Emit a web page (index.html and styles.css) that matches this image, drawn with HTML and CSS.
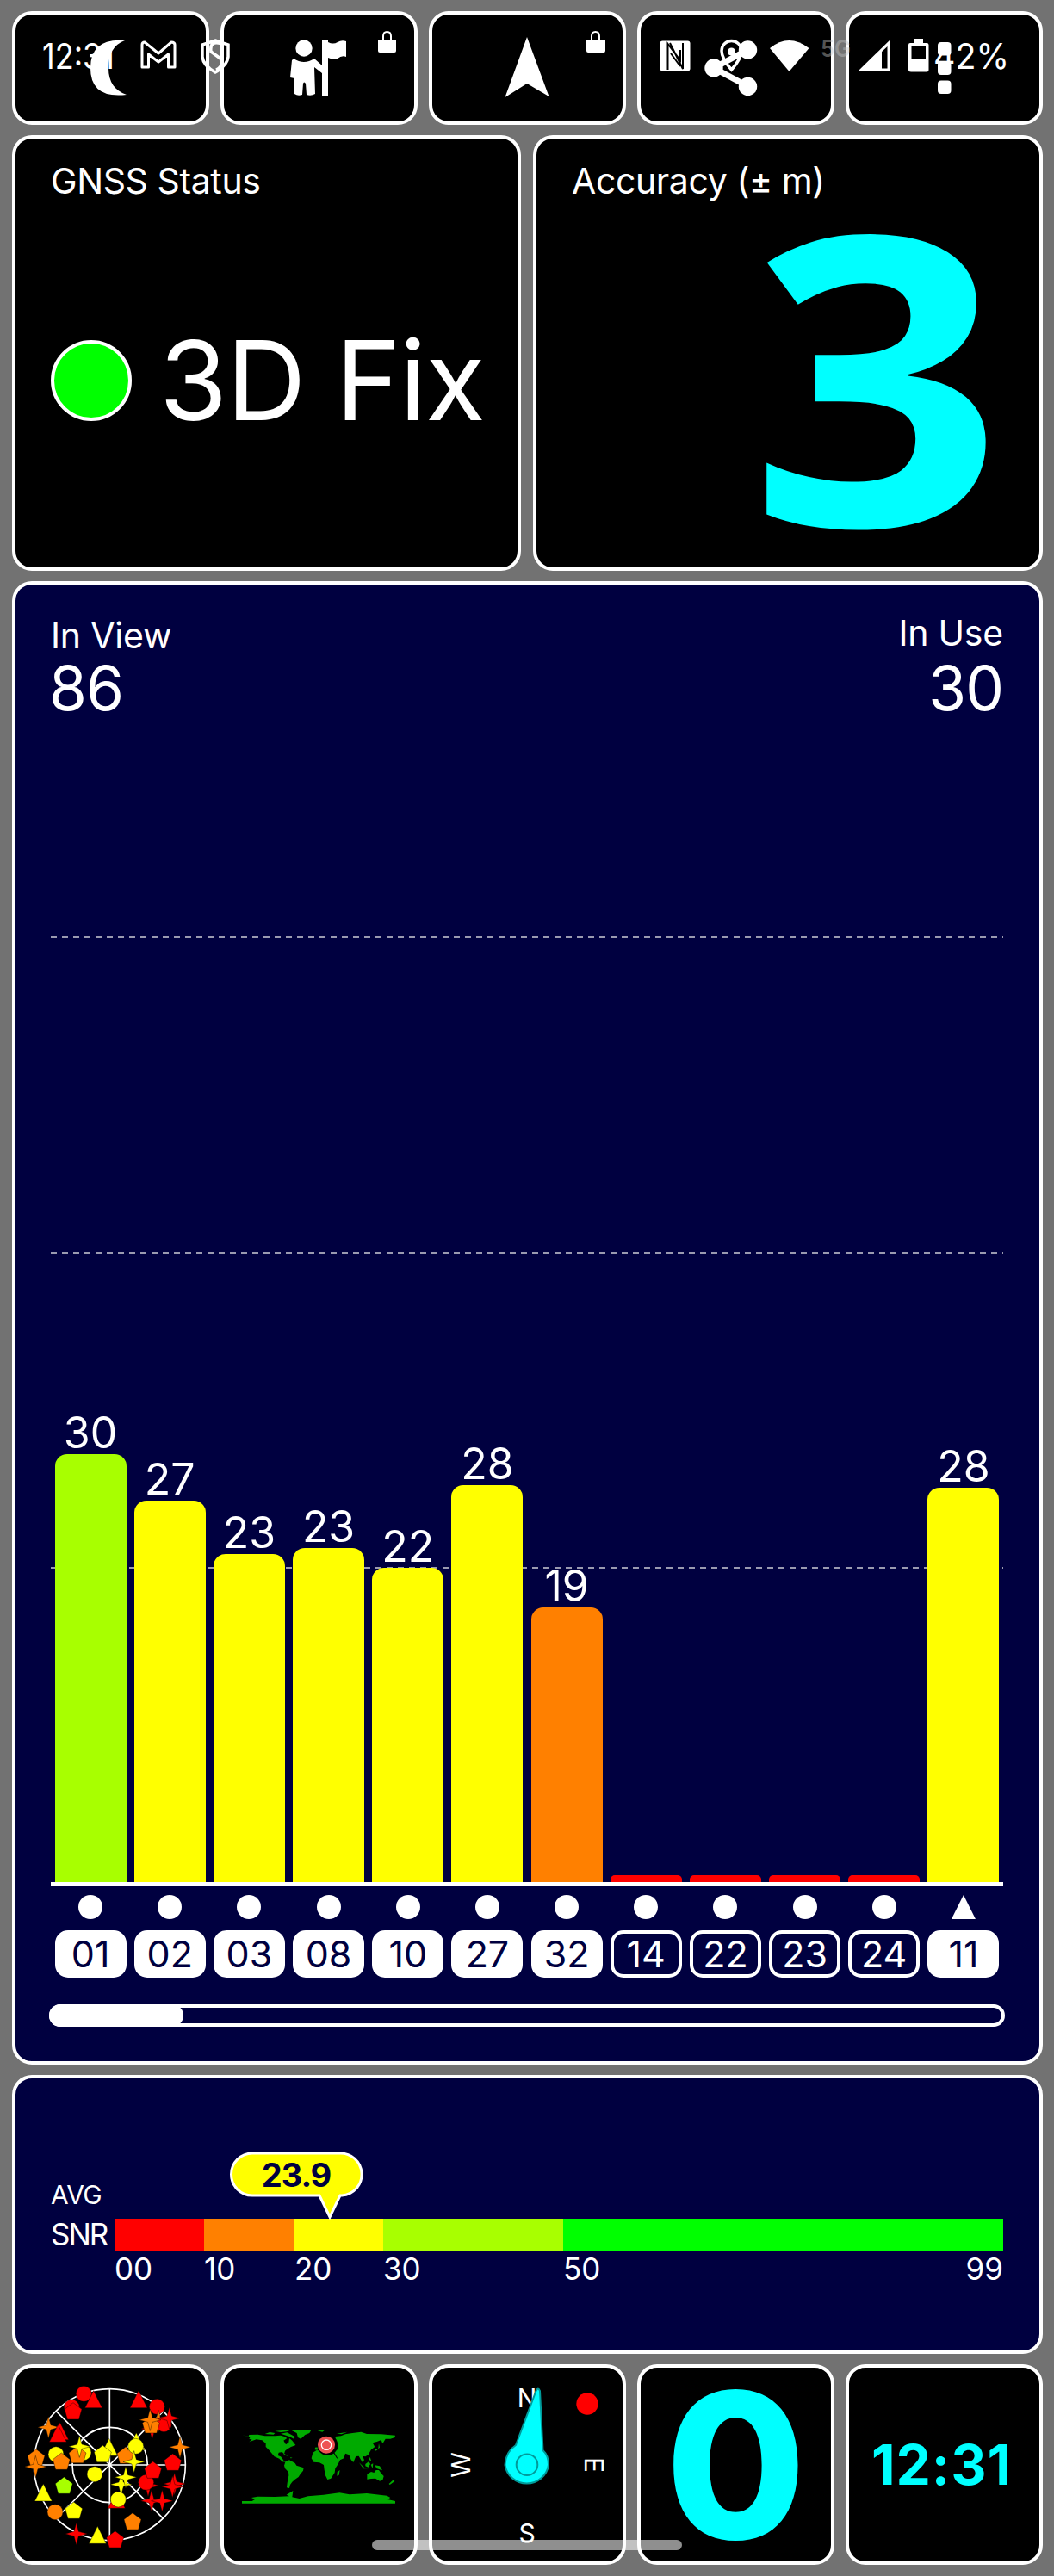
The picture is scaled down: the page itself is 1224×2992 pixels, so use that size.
FILE: index.html
```html
<!DOCTYPE html>
<html lang="en" dir="ltr">
  <head>
    <meta charset="utf-8">
    <title>GNSS Status</title>
    <link rel="stylesheet" href="styles.css">
  </head>
  <body>
    <div id="screen">
      <div class="row" id="toolbar">
        <div class="card">
          <svg viewBox="18 17 221 124"><path d="M145 47 Q105 44 105 79 Q105 115 147 110 Q126 103 126 79 Q126 54 145 47Z"/></svg>
        </div>
        <div class="card">
          <svg viewBox="260 17 221 124">
            <circle cx="353" cy="56" r="9.7"/>
            <path d="M341 68 Q353 76 365 68 L374 76 V47 Q374 46 377 46 H381 V49 Q387 52 392 49 Q397 46 402 48 V66 Q397 64 392 68 Q387 70 381 67 V111 H374 V85 L365 78 L366 109 Q361 112 356 110 L355 97 Q353 94 352 97 L351 110 Q346 112 342 109 L342 91 L337 90 L339 70Z"/>
            <path d="M439 46 H460 V59 Q460 61 458 61 H441 Q439 61 439 59Z"/>
            <path class="line" d="M445 47 V42 Q445 37 449.500 37 Q454 37 454 42 V47" stroke-width="2"/>
          </svg>
        </div>
        <div class="card">
          <svg viewBox="502 17 221 124">
            <path d="M612 43 L637.500 112 L612 97 L586.500 113Z"/>
            <path d="M681 46 H703 V59 Q703 61 701 61 H683 Q681 61 681 59Z"/>
            <path class="line" d="M687 47 V42 Q687 37 691.500 37 Q696 37 696 42 V47" stroke-width="2"/>
          </svg>
        </div>
        <div class="card">
          <svg viewBox="744 17 221 124">
            <path class="line" d="M868 58 L829 79 L868 100" stroke-width="7"/>
            <circle cx="868.500" cy="58" r="10.700"/><circle cx="829" cy="79" r="10.700"/><circle cx="868.500" cy="100.500" r="10.700"/>
          </svg>
        </div>
        <div class="card">
          <svg viewBox="986 17 221 124">
            <rect x="1089" y="49" width="15.500" height="15.500" rx="4"/><rect x="1089" y="71" width="15.500" height="16" rx="4"/><rect x="1089" y="93.500" width="15.500" height="15.500" rx="4"/>
          </svg>
        </div>
      </div>

      <div class="row" id="readouts">
        <div class="card">
          <div class="label">GNSS Status</div>
          <div class="fix"><i></i><span>3D Fix</span></div>
        </div>
        <div class="card">
          <div class="label">Accuracy (± m)</div>
          <div class="accuracy">3</div>
        </div>
      </div>

      <div class="card navy" id="chart">
        <div class="stats">
          <div class="view"><span>In View</span><b>86</b></div>
          <div class="use"><span>In Use</span><b>30</b></div>
        </div>
        <div class="plot">
          <svg class="gridlines" viewBox="0 0 1106 1351"><path d="M0 253 H1106 M0 620 H1106 M0 986 H1106"/></svg>
          <div class="col"><span>30</span><i class="lime" style="height: 497px"></i></div>
          <div class="col"><span>27</span><i class="yellow" style="height: 443px"></i></div>
          <div class="col"><span>23</span><i class="yellow" style="height: 381px"></i></div>
          <div class="col"><span>23</span><i class="yellow" style="height: 388px"></i></div>
          <div class="col"><span>22</span><i class="yellow" style="height: 365px"></i></div>
          <div class="col"><span>28</span><i class="yellow" style="height: 461px"></i></div>
          <div class="col"><span>19</span><i class="orange" style="height: 319px"></i></div>
          <div class="col"><i class="red" style="height: 8px"></i></div>
          <div class="col"><i class="red" style="height: 8px"></i></div>
          <div class="col"><i class="red" style="height: 8px"></i></div>
          <div class="col"><i class="red" style="height: 8px"></i></div>
          <div class="col"><span>28</span><i class="yellow" style="height: 458px"></i></div>
        </div>
        <div class="sats">
          <div class="sat used"><i></i><span>01</span></div>
          <div class="sat used"><i></i><span>02</span></div>
          <div class="sat used"><i></i><span>03</span></div>
          <div class="sat used"><i></i><span>08</span></div>
          <div class="sat used"><i></i><span>10</span></div>
          <div class="sat used"><i></i><span>27</span></div>
          <div class="sat used"><i></i><span>32</span></div>
          <div class="sat"><i></i><span>14</span></div>
          <div class="sat"><i></i><span>22</span></div>
          <div class="sat"><i></i><span>23</span></div>
          <div class="sat"><i></i><span>24</span></div>
          <div class="sat used"><i class="tri"></i><span>11</span></div>
        </div>
        <div class="scroll"><i></i></div>
      </div>

      <div class="card navy" id="snr">
        <div class="names"><span class="avg">AVG</span><span>SNR</span></div>
        <div class="scale">
          <div class="bands"><i class="red"></i><i class="orange"></i><i class="yellow"></i><i class="lime"></i><i class="green"></i></div>
          <div class="ticks"><span>00</span><span>10</span><span>20</span><span>30</span><span>50</span><span>99</span></div>
          <div class="balloon">
            <svg viewBox="0 0 156 80"><path d="M27 2 H128 A24.500 24.500 0 0 1 131 51 H129 L117 76 L105 51 H27 A24.500 24.500 0 0 1 27 2Z"/></svg>
            <span>23.9</span>
          </div>
        </div>
      </div>

      <div class="row" id="widgets">
        <div class="card">
          <svg viewBox="18 2750 221 225">
            <defs>
              <circle id="c" r="27"/>
              <path id="t" d="M0 -34 L30 26 H-30Z"/>
              <path id="p" d="M0 -31 L30 -8 L20 27 H-20 L-30 -8Z"/>
              <path id="s" d="M0 -38 L8 -8 L38 0 L8 8 L0 38 L-8 8 L-38 0 L-8 -8Z"/>
            </defs>
            <g transform="translate(30 2765) scale(.33333)">
              <g class="line" stroke-width="5">
                <circle cx="292" cy="293" r="264"/><circle cx="293" cy="294" r="131"/>
                <path d="M292 29 V557 M28 294 H556 M106 107 L479 481 M106 480 L479 107"/>
              </g>
              <g class="marks">
                <use href="#c" x="160" y="93" fill="red"/><use href="#p" x="165" y="108" fill="red"/>
                <use href="#c" x="202" y="46" fill="red"/><use href="#t" x="236" y="69" fill="red"/>
                <use href="#t" x="393" y="69" fill="red"/><use href="#c" x="457" y="91" fill="red"/>
                <use href="#s" x="440" y="168" fill="red"/><use href="#s" x="462" y="141" fill="#ff8000"/>
                <use href="#c" x="481" y="152" fill="red"/><use href="#s" x="500" y="131" fill="red"/>
                <use href="#p" x="436" y="156" fill="#ff8000"/><use href="#s" x="433" y="137" fill="#ff8000"/>
                <use href="#s" x="79" y="163" fill="#ff8000"/>
                <use href="#t" x="119" y="180" fill="red"/><use href="#t" x="112" y="188" fill="red"/>
                <use href="#c" x="105" y="257" fill="#ff0"/><use href="#p" x="36" y="270" fill="#ff8000"/>
                <use href="#s" x="34" y="300" fill="#ff8000"/><use href="#p" x="124" y="283" fill="#ff8000"/>
                <use href="#c" x="201" y="251" fill="#ff0"/><use href="#p" x="180" y="260" fill="#ff8000"/>
                <use href="#s" x="187" y="230" fill="#ff0"/><use href="#t" x="290" y="236" fill="#ff0"/>
                <use href="#p" x="268" y="257" fill="#ff0"/><use href="#p" x="348" y="262" fill="#ff8000"/>
                <use href="#t" x="385" y="216" fill="#ff0"/><use href="#c" x="383" y="229" fill="#ff0"/>
                <use href="#s" x="377" y="283" fill="#ff0"/><use href="#s" x="537" y="232" fill="#ff8000"/>
                <use href="#p" x="512" y="286" fill="red"/><use href="#s" x="426" y="366" fill="red"/>
                <use href="#c" x="419" y="355" fill="red"/><use href="#p" x="443" y="313" fill="red"/>
                <use href="#s" x="518" y="360" fill="red"/><use href="#s" x="511" y="370" fill="red"/>
                <use href="#s" x="438" y="419" fill="red"/><use href="#s" x="475" y="419" fill="red"/>
                <use href="#s" x="332" y="362" fill="#ff0"/><use href="#s" x="348" y="337" fill="#ff0"/>
                <use href="#c" x="240" y="326" fill="#ff0"/><use href="#p" x="133" y="367" fill="#a8ff00"/>
                <use href="#t" x="61" y="394" fill="#ff0"/><use href="#c" x="102" y="458" fill="#ff8000"/>
                <use href="#p" x="167" y="454" fill="#ff0"/><use href="#t" x="316" y="419" fill="red"/>
                <use href="#c" x="322" y="414" fill="#ff0"/><use href="#p" x="372" y="492" fill="#ff8000"/>
                <use href="#s" x="176" y="534" fill="red"/><use href="#t" x="250" y="542" fill="#ff0"/>
                <use href="#p" x="311" y="555" fill="red"/>
              </g>
            </g>
          </svg>
        </div>
        <div class="card">
          <svg viewBox="260 2750 221 225">
            <g class="land" transform="translate(276 2812) scale(.33333)">
              <path d="M15 49 L38 54 L40 48 L70 47 L95 52 L130 52 L150 50 L165 55 L172 60 L160 68 L168 82 L178 74 L180 60 L190 68 L202 84 L186 90 L172 98 L165 104 L162 115 L155 108 L143 110 L140 120 L150 124 L155 130 L162 140 L170 143 L156 142 L145 131 L128 124 L118 112 L108 100 L98 90 L98 78 L85 67 L65 64 L40 73 L50 65 L40 62 L44 56Z"/>
              <path d="M95 45 L112 39 L130 42 L125 47Z M130 35 L165 32 L188 31 L170 37 L150 39Z M150 44 L172 40 L200 55 L196 62 L180 54Z"/>
              <path d="M188 33 L215 30 L257 31 L250 42 L235 48 L220 62 L210 57 L206 42Z"/>
              <path d="M158 112 L178 122 L164 119Z M184 126 L191 129 L184 130Z"/>
              <path d="M167 140 L180 136 L200 147 L205 155 L230 163 L228 173 L218 185 L212 195 L200 203 L190 212 L183 222 L180 234 L171 232 L173 215 L178 190 L177 178 L165 165 L162 155Z"/>
              <path d="M262 110 L275 102 L300 105 L320 108 L335 113 L345 130 L357 135 L350 150 L340 165 L338 180 L325 200 L313 204 L306 190 L302 170 L300 153 L285 145 L265 143 L257 130Z"/>
              <path d="M347 178 L356 171 L353 188 L346 191Z M270 92 L282 91 L278 101 L269 100Z M278 34 L302 33 L295 38Z"/>
              <path d="M340 54 L360 52 L375 46 L400 42 L430 38 L450 45 L500 46 L549 50 L548 57 L532 62 L515 62 L505 79 L500 66 L485 72 L470 76 L478 90 L465 100 L455 118 L445 124 L435 122 L441 136 L434 143 L422 122 L412 123 L403 144 L395 135 L388 118 L375 113 L370 130 L353 137 L343 120 L338 112 L330 105 L352 98 L344 80Z"/>
              <path d="M345 44 L382 38 L362 46Z M478 100 L490 95 L492 78 L495 92 L482 104Z M461 125 L466 140 L458 135Z"/>
              <path d="M423 145 L441 162 L460 165 L438 166Z M445 150 L457 141 L462 150 L455 161 L445 157Z M464 152 L472 148 L470 165Z M478 154 L495 157 L504 172 L484 165Z"/>
              <path d="M451 185 L465 177 L475 180 L482 171 L492 171 L500 182 L509 192 L505 206 L495 209 L480 200 L465 201 L451 203Z M543 204 L547 210 L530 222 L527 219Z"/>
              <path d="M15 279 L50 279 L60 273 L48 267 L70 263 L130 264 L180 262 L170 257 L193 243 L190 265 L215 270 L245 262 L300 257 L355 250 L390 256 L450 252 L520 260 L532 267 L522 273 L549 279 V287 H15Z"/>
              <circle cx="313" cy="84" r="36" fill="#000"/>
              <circle cx="309" cy="83" r="30" fill="#ee5252"/>
              <circle class="line" cx="309" cy="83" r="17" stroke-width="4"/>
            </g>
          </svg>
        </div>
        <div class="card">
          <svg viewBox="502 2750 221 225">
            <g class="compass">
              <text x="612" y="2795.500">N</text><text x="612" y="2952.500">S</text>
              <text transform="translate(545.500 2863) rotate(-90)">W</text>
              <text transform="translate(679 2863) rotate(90)">E</text>
            </g>
            <circle cx="682" cy="2792" r="12.700" fill="red"/>
            <path class="needle" d="M599 2840 L622.500 2777 Q625 2772 627 2777 L630.500 2846 Q637 2852 637 2863 A25.500 25 0 0 1 586.500 2863 Q587 2848 599 2840Z"/>
            <circle class="needle" cx="612" cy="2862.700" r="12.300"/>
          </svg>
        </div>
        <div class="card"><span class="speed">0</span></div>
        <div class="card"><span class="clock">12:31</span></div>
      </div>
    </div>

    <!-- system bars -->
    <svg id="status" viewBox="0 0 1224 150">
      <text x="49" y="80" textLength="84" lengthAdjust="spacingAndGlyphs">12:31</text>
      <path class="line" d="M165 78 V52 Q165 49 168 49 L184 62 L199 49 Q203 49 203 52 V78 H195.500 V63 L184 72 L172.500 63 V78Z" stroke-width="3" stroke-linejoin="round"/>
      <path class="line" d="M250 47 L265 52 V66 Q264 76 250 84 Q236 76 235 66 V52Z M258 51 Q243 46 245 60 L256 68 Q260 77 251 81" stroke-width="3.500"/>
      <rect x="766.500" y="47.500" width="35" height="35" rx="3"/>
      <path d="M775.500 81 V51 L790 70 V58 M778 50 L793 80 V50 M779 62 L790 77" fill="none" stroke="#000" stroke-width="2"/>
      <path class="line" d="M849.500 81 Q838 68 838 59 A11.500 11.500 0 0 1 861 59 Q861 68 849.500 81Z" stroke-width="3.500"/>
      <circle cx="849.500" cy="60" r="4.500"/>
      <path d="M894 56 Q916 38 939.500 56 L916.500 83Z"/>
      <text class="net" x="953" y="66" textLength="35" lengthAdjust="spacingAndGlyphs">5G</text>
      <path fill-rule="evenodd" d="M996 83 L1034 46 V83Z M1024 60 V79.500 H1030.500 V54Z"/>
      <path fill-rule="evenodd" d="M1055 52 Q1055 50 1057 50 H1062 V45 H1072 V50 H1076 Q1078.500 50 1078.500 52 V81 Q1078.500 83.500 1076 83.500 H1058 Q1055 83.500 1055 81Z M1058.500 53.500 V68 H1075 V53.500Z"/>
      <text x="1084" y="80" textLength="88" lengthAdjust="spacingAndGlyphs">42%</text>
    </svg>
    <div id="home-bar"></div>
  </body>
</html>
```
FILE: styles.css
```css
* {
  box-sizing: border-box;
}
body {
  margin: 0px;
  background: #727272;
  color: white;
  font-family: Inter, "Liberation Sans", sans-serif;
  line-height: 1;
}
#screen {
  display: grid;
  width: 1224px;
  height: 2992px;
  padding: 13px 13px 13px 14px;
  grid-template-rows: 132px 506px 1723px 324px 233px;
  row-gap: 12px;
}
.row {
  display: grid;
  grid-template-columns: repeat(5, 229px);
  column-gap: 13px;
}
#readouts {
  grid-template-columns: 591px 592px;
  column-gap: 14px;
}
.card {
  border: 4px solid white;
  border-radius: 23px;
  background: black;
  overflow: hidden;
}
.navy {
  background: #000040;
}
svg {
  display: block;
  fill: white;
}
.line {
  fill: none;
  stroke: white;
}
.red { background: #ff0000; }
.orange { background: #ff8000; }
.yellow { background: #ffff00; }
.lime { background: #a8ff00; }
.green { background: #00ff00; }

/* readouts */
#readouts .card {
  padding: 29px 42px 0px 41px;
}
.label {
  font-size: 41px;
  letter-spacing: -0.4px;
  white-space: nowrap;
}
.fix {
  display: flex;
  align-items: center;
  margin-top: 125px;
  height: 172px;
}
.fix i {
  flex: none;
  width: 94px;
  height: 94px;
  border: 4px solid white;
  border-radius: 50%;
  background: #00ff00;
}
.fix span {
  margin-left: 32px;
  font-size: 128px;
  letter-spacing: -1px;
  white-space: nowrap;
}
.accuracy {
  font-family: "Open Sans", "Noto Sans", sans-serif;
  font-size: 468px;
  font-weight: 700;
  line-height: 0.85;
  text-align: right;
  color: #00ffff;
  transform: scaleX(1.1);
  transform-origin: right;
}

/* chart */
#chart {
  padding: 36px 42px 0px 41px;
}
.stats {
  display: flex;
  justify-content: space-between;
  height: 120px;
}
.stats span, .stats b {
  display: block;
}
.stats span {
  font-size: 41px;
  letter-spacing: -0.2px;
}
.stats b {
  margin-top: 8px;
  font-size: 71px;
  font-weight: 400;
  letter-spacing: -1px;
}
.view {
  padding-top: 3px;
}
.view b {
  margin-top: 5px;
  margin-left: -2px;
}
.use {
  text-align: right;
}
.plot, .sats {
  position: relative;
  display: grid;
  grid-template-columns: repeat(12, 1fr);
}
.plot {
  height: 1355px;
  border-bottom: 4px solid white;
}
.gridlines {
  position: absolute;
  left: 0px;
  top: 0px;
  width: 1106px;
  height: 1351px;
  fill: none;
  stroke: #9a9ab0;
  stroke-width: 2px;
  stroke-dasharray: 7 6;
}
.col {
  position: relative;
  display: flex;
  flex-direction: column;
  justify-content: flex-end;
  padding: 0px 4.6px;
  text-align: center;
}
.col span {
  font-size: 50px;
}
.col i {
  border-radius: 14px 14px 0px 0px;
}
.col .red {
  border-radius: 5px 5px 0px 0px;
}
.sat {
  padding: 11px 4.6px 0px;
}
.sat i {
  display: block;
  width: 28px;
  height: 28px;
  margin: 0px auto 13px;
  border-radius: 50%;
  background: white;
}
.sat .tri {
  border-radius: 0px;
  clip-path: polygon(50% 0%, 100% 100%, 0% 100%);
}
.sat span {
  display: block;
  height: 55px;
  border: 4px solid white;
  border-radius: 15px;
  font-size: 43px;
  line-height: 47px;
  text-align: center;
}
.used span {
  background: white;
  color: #000040;
}
.scroll {
  height: 26px;
  margin: 31px -2px 0px;
  border: 4px solid white;
  border-radius: 13px;
}
.scroll i {
  display: block;
  width: 156px;
  height: 26px;
  margin: -4px;
  border-radius: 13px;
  background: white;
}

/* signal to noise */
#snr {
  display: flex;
  padding: 120px 42px 0px 41px;
}
.names {
  width: 74px;
  font-size: 35px;
  letter-spacing: -2px;
}
.names span {
  display: block;
}
.names .avg {
  margin-bottom: 14px;
  font-size: 30px;
  letter-spacing: -0.5px;
}
.scale {
  position: relative;
  width: 1032px;
  padding-top: 43px;
}
.bands, .ticks {
  display: grid;
  grid-template-columns: 104px 105px 103px 209px 1fr;
}
.bands {
  height: 37px;
}
.ticks {
  grid-template-columns: 104px 105px 103px 209px 1fr 1fr;
  margin-top: 4px;
  font-size: 35px;
}
.ticks span:last-child {
  text-align: right;
}
.balloon {
  position: absolute;
  left: 133px;
  top: -35px;
  width: 156px;
}
.balloon svg {
  fill: #ffff00;
  stroke: white;
  stroke-width: 3px;
}
.balloon span {
  position: absolute;
  left: 0px;
  top: 8px;
  width: 156px;
  font-size: 38px;
  font-weight: 700;
  letter-spacing: -1px;
  color: #000040;
  text-align: center;
}

/* bottom widgets */
#widgets .card {
  display: flex;
  align-items: center;
  justify-content: center;
}
.marks {
  stroke: rgba(0, 0, 0, 0.4);
  stroke-width: 3px;
}
.land {
  fill: #00aa00;
}
.compass {
  font-size: 30px;
  text-anchor: middle;
}
.needle {
  fill: #00ffff;
  stroke: #009a9a;
  stroke-width: 2px;
}
.speed {
  font-size: 236px;
  font-weight: 800;
  color: #00ffff;
}
.clock {
  margin-right: 6px;
  font-size: 64px;
  font-weight: 700;
  letter-spacing: 1px;
  color: #00ffff;
}

#status {
  position: absolute;
  left: 0px;
  top: 0px;
  width: 1224px;
  height: 150px;
  font-size: 41px;
}
#status .net {
  fill: #c0c0c0;
  fill-opacity: 0.45;
  font-size: 27px;
  font-weight: 600;
}
#home-bar {
  position: absolute;
  left: 432px;
  top: 2950px;
  width: 360px;
  height: 12px;
  border-radius: 6px;
  background: rgba(255, 255, 255, 0.56);
}
```
